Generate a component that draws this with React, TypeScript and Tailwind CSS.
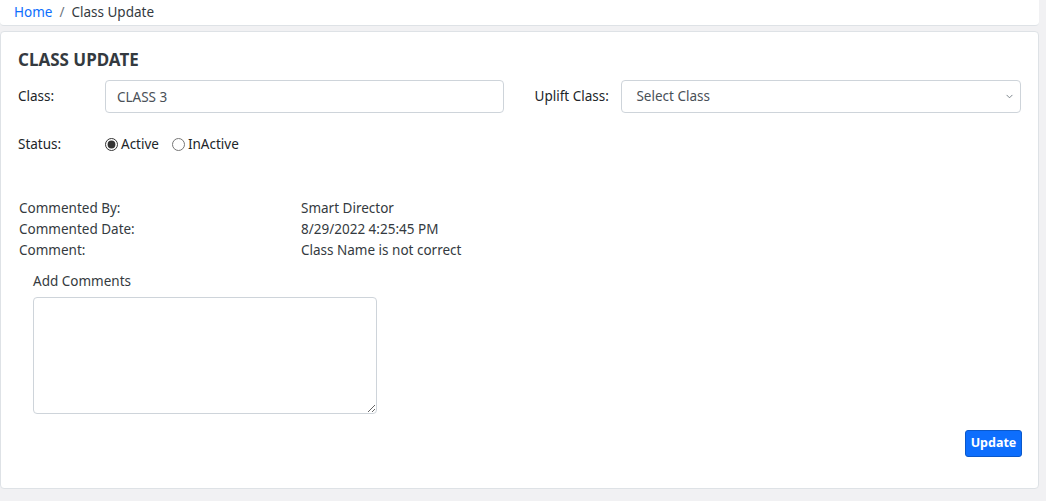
import { useState } from "react";

const App = () => {
  const [status, setStatus] = useState("active");

  return (
    <div
      className="w-[1046px] h-[501px] bg-[#f1f1f3] overflow-hidden text-[13.5px] text-[#212529]"
      style={{ fontFamily: '"Noto Sans", "Open Sans", sans-serif' }}
    >
      <div className="w-[1039px]">
        {/* Breadcrumb */}
        <div className="h-[26px] bg-white border-b border-[#dee2e6] rounded-b-[4px] flex items-center px-[14px] pb-[1px]">
          <a href="#" className="text-[#0d6efd]">
            Home
          </a>
          <span className="px-[7px] text-[#6c757d]">/</span>
          <span className="text-[#343a40]">Class Update</span>
        </div>

        {/* Card */}
        <div className="mt-[5px] h-[458px] bg-white border border-[#dee2e6] rounded-[4px] px-[17px] pt-[17px]">
          <h2 className="text-[17px] font-bold text-[#343a40] leading-[22px] mb-[9px]">
            CLASS UPDATE
          </h2>

          <div className="flex items-center">
            <label className="w-[87px]">Class:</label>
            <input
              defaultValue="CLASS 3"
              className="w-[399px] h-[33px] border border-[#ced4da] rounded-[4px] px-[11px] text-[#495057] outline-none"
            />
            <label className="ml-[31px] w-[87px]">Uplift Class:</label>
            <div className="relative w-[400px]">
              <select className="w-full h-[33px] border border-[#ced4da] rounded-[4px] px-[14px] text-[#495057] appearance-none bg-white outline-none">
                <option>Select Class</option>
              </select>
              <svg
                className="absolute right-[7px] top-[13px] pointer-events-none"
                width="9"
                height="7"
                viewBox="0 0 16 16"
              >
                <path d="M2 5l6 6 6-6" fill="none" stroke="#6c757d" strokeWidth="2" strokeLinecap="round" strokeLinejoin="round" />
              </svg>
            </div>
          </div>

          <div className="flex items-center mt-[21px]">
            <label className="w-[87px]">Status:</label>
            <label className="flex items-center gap-[3px] mr-[13px]">
              <input
                type="radio"
                checked={status === "active"}
                onChange={() => setStatus("active")}
                className="w-[13px] h-[13px] accent-[#333]"
              />
              Active
            </label>
            <label className="flex items-center gap-[3px]">
              <input
                type="radio"
                checked={status === "inactive"}
                onChange={() => setStatus("inactive")}
                className="w-[13px] h-[13px] accent-[#333]"
              />
              InActive
            </label>
          </div>

          <div className="mt-[44px] leading-[21px] text-[#343a40] ml-[1px]">
            <div className="flex">
              <span className="w-[282px]">Commented By:</span>
              <span>Smart Director</span>
            </div>
            <div className="flex">
              <span className="w-[282px]">Commented Date:</span>
              <span>8/29/2022 4:25:45 PM</span>
            </div>
            <div className="flex">
              <span className="w-[282px]">Comment:</span>
              <span>Class Name is not correct</span>
            </div>
          </div>

          <div className="ml-[15px] mt-[10px]">
            <div className="text-[#343a40] leading-[20px]">Add Comments</div>
            <textarea className="mt-[6px] w-[344px] h-[117px] border border-[#ced4da] rounded-[4px] outline-none block" />
          </div>

          <div className="flex justify-end mt-[16px]">
            <button className="h-[27px] w-[57px] bg-[#0d6efd] border border-[#0a58ca] rounded-[3px] text-white font-bold text-[12.5px] mr-[-1px]">
              Update
            </button>
          </div>
        </div>
      </div>
    </div>
  );
};

export default App;
